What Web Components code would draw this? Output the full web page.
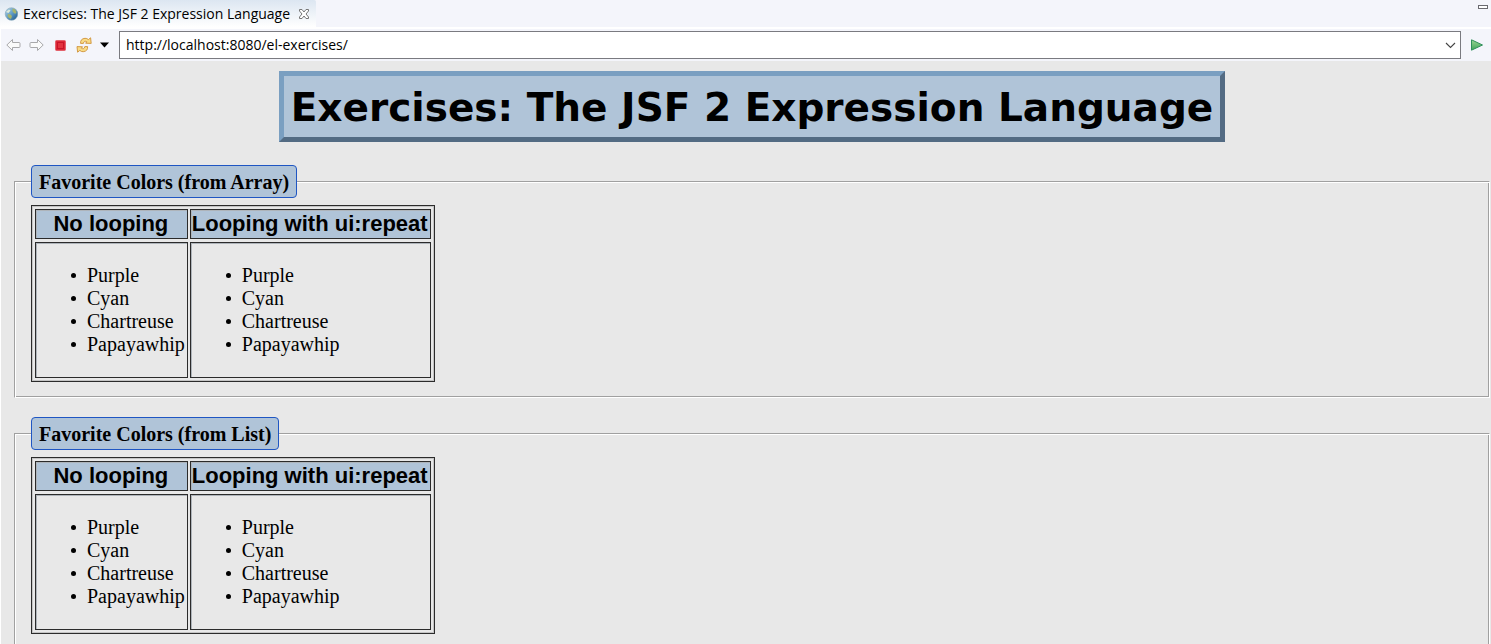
<!DOCTYPE html>
<html lang="en">
<head>
<meta charset="utf-8">
<title>Exercises: The JSF 2 Expression Language</title>
<style>
  body { margin: 0; background: #e8e8e8; }
</style>
</head>
<body>
<browser-window>
  <view-tab slot="tab">Exercises: The JSF 2 Expression Language</view-tab>
  <address-bar slot="bar" url="http://localhost:8080/el-exercises/"></address-bar>
  <page-title>Exercises: The JSF 2 Expression Language</page-title>
  <color-group legend="Favorite Colors (from Array)" colors="Purple,Cyan,Chartreuse,Papayawhip"></color-group>
  <color-group legend="Favorite Colors (from List)" colors="Purple,Cyan,Chartreuse,Papayawhip"></color-group>
</browser-window>
<script>
class Base extends HTMLElement {
  connectedCallback() {
    if (!this.shadowRoot) this.attachShadow({ mode: 'open' }).innerHTML = this.render();
  }
}

customElements.define('browser-window', class extends Base {
  render() {
    return `<style>
      :host { display: flex; flex-direction: column; height: 100vh; overflow: hidden; background: #f4f5fb; }
      header { display: flex; justify-content: space-between; align-items: flex-start; height: 27px; flex: none; border-bottom: 2px solid #fff; }
      .min { margin: 5px 3px 0 0; width: 10px; height: 4px; padding: 0; box-sizing: border-box; border: 1px solid #6a6a70; background: #fff; }
      main { flex: 1; min-height: 0; overflow: auto; scrollbar-width: none; background: #e8e8e8;
        border-left: 1px solid #fff; padding: 10px 1px 0 13px; }
    </style>
    <header><slot name="tab"></slot><button class="min" aria-label="Minimize"></button></header>
    <slot name="bar"></slot>
    <main><slot></slot></main>`;
  }
});

customElements.define('view-tab', class extends Base {
  render() {
    return `<style>
      :host { display: flex; align-items: center; height: 27px; box-sizing: border-box; padding: 0 6px 0 4px;
        background: linear-gradient(#dce6f1, #fff); border-radius: 0 2px 0 0;
        font: 14px/20px "Open Sans", "Noto Sans", sans-serif; color: #000; }
      .name { padding: 0 8px 0 5px; white-space: nowrap; }
      svg { display: block; flex: none; }
      button { border: 0; background: none; padding: 0; }
    </style>
    <svg width="14" height="14" viewBox="0 0 14 14" aria-hidden="true">
      <defs><linearGradient id="g" x2="1" y2="1"><stop offset="0" stop-color="#b9d9ea"/><stop offset=".5" stop-color="#5f9bc6"/><stop offset="1" stop-color="#174f82"/></linearGradient></defs>
      <circle cx="7.500" cy="7" r="6.300" fill="url(#g)" stroke="#8aa9bb" stroke-width=".6"/>
      <path d="M8.500 1.500l2.500.8 1.500 3-1 1.500-1.500-.5-1.500-2zM4 7l2.500.5 1.500 1.500-1 3-2-1-1.500-2z" fill="#a5b36c"/>
      <path d="M2 5l3-2.500 1.500 1-2 2.500z" fill="#dfebd9"/>
    </svg>
    <span class="name"><slot></slot></span>
    <button aria-label="Close tab"><svg width="12" height="12" viewBox="0 0 12 12"><path d="M1.500 1.500h2.500l2 2.500 2-2.500h2.500v1.500L8 6l2.500 3v1.500H8L6 8l-2 2.500H1.500V9L4 6 1.500 3z" fill="#fff" stroke="#777"/></svg></button>`;
  }
});

customElements.define('address-bar', class extends Base {
  render() {
    return `<style>
      :host { display: flex; align-items: center; flex: none; height: 32px; padding: 0 7px 0 5px; background: #f4f5fb; border-left: 1px solid #fff; box-sizing: border-box; }
      svg { display: block; }
      button { border: 0; background: none; padding: 0; flex: none; }
      .tools { display: flex; align-items: center; gap: 8px; margin-right: 10px; }
      .combo { display: flex; flex: 1; height: 28px; box-sizing: border-box; border: 1px solid #7a7a80; background: #fff; align-items: center; padding-right: 4px; margin-right: 9px; }
      input { flex: 1; min-width: 0; border: 0; outline: 0; padding: 0 6px; background: none; color: #000;
        font: 14px/20px "Open Sans", "Noto Sans", sans-serif; }
    </style>
    <div class="tools">
      <button aria-label="Back"><svg width="15" height="14" viewBox="0 0 15 14"><path d="M.8 7L6.500 1.500v3h6.500q1 0 1 1v3q0 1-1 1H6.500v3z" fill="#fafafa" stroke="#a8a8aa"/></svg></button>
      <button aria-label="Forward"><svg width="15" height="14" viewBox="0 0 15 14"><path d="M14.200 7L8.500 1.500v3H2q-1 0-1 1v3q0 1 1 1h6.500v3z" fill="#fafafa" stroke="#a8a8aa"/></svg></button>
      <button aria-label="Stop"><svg width="16" height="14" viewBox="0 0 16 14"><rect x="3.500" y="2.500" width="10" height="10" rx="1" fill="#dc2a3a" stroke="#e4616b"/><rect x="5.500" y="4.500" width="6" height="6" fill="#e3333f" stroke="#c81528"/></svg></button>
      <button aria-label="Refresh"><svg width="16" height="16" viewBox="0 0 16 16"><g fill="#f9dc86" stroke="#cf9138" stroke-width=".9" stroke-linejoin="round"><path d="M4.600 6.400Q4.200 1.800 9 1.300q1.900-.1 3.400 1.300L14.600.8l.6 5.600-5.600-.2 1.300-1.400Q8 3.200 7.400 6.400z"/><path d="M11.600 9.600Q12 14.200 7.200 14.700q-1.900.1-3.400-1.300L1.600 15.200 1 9.600l5.600.2-1.300 1.400Q8.200 12.800 8.800 9.600z"/></g></svg></button>
      <button aria-label="Refresh options"><svg width="9" height="6" viewBox="0 0 9 6"><path d="M0 .5h9L4.500 5.500z" fill="#000"/></svg></button>
    </div>
    <div class="combo">
      <input type="text" aria-label="Address" value="${this.getAttribute('url')}">
      <button aria-label="Show history"><svg width="11" height="7" viewBox="0 0 11 7"><path d="M1 1l4.500 4.500L10 1" fill="none" stroke="#444" stroke-width="1.100"/></svg></button>
    </div>
    <button aria-label="Go"><svg width="14" height="12" viewBox="0 0 14 12"><defs><linearGradient id="p" x2="0" y2="1"><stop offset="0" stop-color="#9bd693"/><stop offset="1" stop-color="#3ea35a"/></linearGradient></defs><path d="M1.500 .8L12.500 6 1.500 11.200z" fill="url(#p)" stroke="#2f8f5b"/></svg></button>`;
  }
});

customElements.define('page-title', class extends Base {
  render() {
    return `<style>
      :host { display: flex; justify-content: center; margin-bottom: 23px; }
      h1 { margin: 0; border: 5px solid; border-color: #7a9fc1 #536b83 #536b83 #7a9fc1; background: #b0c4d8; padding: 7px 7px 5px;
        font: bold 39px/49px "DejaVu Sans", sans-serif; color: #000; text-align: center; white-space: nowrap; }
    </style><h1><slot></slot></h1>`;
  }
});

customElements.define('color-group', class extends Base {
  render() {
    const items = this.getAttribute('colors').split(',').map(c => `<li>${c}</li>`).join('');
    return `<style>
      :host { display: block; margin-bottom: 19px; font: 20px/23px "Liberation Serif", serif; color: #000; }
      fieldset { margin: 0; min-width: 0; border: 1px solid; border-color: #a0a0a0 #fff #fff #a0a0a0;
        box-shadow: inset 1px 1px 0 #fff, inset -1px -1px 0 #a0a0a0; padding: 7px 16px 15px; }
      legend { box-sizing: border-box; height: 33px; padding: 5px 7px 3px; border: 1px solid #1f56c3; border-radius: 4px; background: #b0c4d8; font-weight: bold; }
      table { border: 1px solid #2b2b2b; box-shadow: inset 0 0 0 1px #c4c4c4; padding: 0 1px; border-spacing: 2px 3px; border-collapse: separate; }
      th, td { border: 1px solid #2b2b2b; box-shadow: inset 1px 1px 0 #aeb4ba; }
      th { background: #b0c4d8; padding: 2px 2px 2px 1px; font: bold 22px/24px "Liberation Sans", sans-serif; }
      td { padding: 1px 2px 1px 1px; vertical-align: top; }
      ul { margin: 20px 0; padding: 0 0 0 50px; list-style: none; }
      li::before { content: ""; display: inline-block; width: 5px; height: 5px; margin: 0 11px 0 -16px; border-radius: 50%; background: #000; vertical-align: 4px; }
    </style>
    <fieldset><legend>${this.getAttribute('legend')}</legend>
      <table>
        <thead><tr><th scope="col">No looping</th><th scope="col">Looping with ui:repeat</th></tr></thead>
        <tbody><tr><td><ul>${items}</ul></td><td><ul>${items}</ul></td></tr></tbody>
      </table>
    </fieldset>`;
  }
});
</script>
</body>
</html>
